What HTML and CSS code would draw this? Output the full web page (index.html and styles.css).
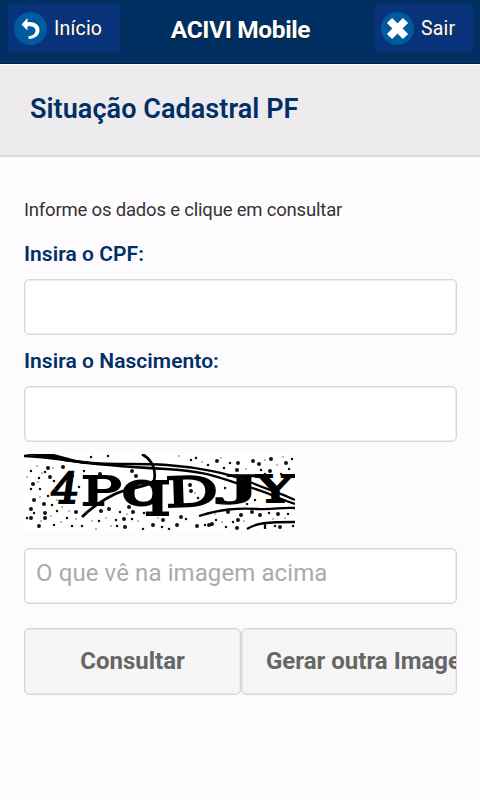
FILE: index.html
```html
<!DOCTYPE html>
<html lang="pt-BR">
<head>
<meta charset="utf-8">
<title>ACIVI Mobile</title>
<link rel="stylesheet" href="styles.css">
</head>
<body>
<header class="topbar">
  <a class="nav nav-home"><svg class="icon" viewBox="0 0 33 33"><circle cx="16.500" cy="16.500" r="16.500" fill="#005aa0"/><path d="M7.500 12.500L13.500 6V10C21 9.500 25.500 13 25.500 18C25.500 23.500 21 27 14.500 27V24.200C18.500 24 21.500 22 21.500 18.500C21.500 15.500 18.500 14 13.500 14.300V18.500Z" fill="#fff"/></svg><span>Início</span></a>
  <h1>ACIVI Mobile</h1>
  <a class="nav nav-exit"><svg class="icon" viewBox="0 0 33 33"><circle cx="16.500" cy="16.500" r="16.500" fill="#005aa0"/><path d="M8.500 8.500L24.500 24.500M24.500 8.500L8.500 24.500" stroke="#fff" stroke-width="7.400" fill="none"/></svg><span>Sair</span></a>
</header>
<div class="heading"><h2>Situação Cadastral PF</h2></div>
<main>
  <p class="intro">Informe os dados e clique em consultar</p>
  <label for="cpf">Insira o CPF:</label>
  <input id="cpf" type="text">
  <label class="birth-label" for="birth">Insira o Nascimento:</label>
  <input id="birth" type="text">
  <svg class="captcha" viewBox="0 0 271 76">
    <rect width="271" height="76" fill="#fff"/>
    <g class="letters">
      <text transform="translate(25 49) skewX(-8) scale(1.050 1)" font-size="42">4</text>
      <text transform="translate(57 51) scale(1.550 1)" font-size="39">P</text>
      <text transform="translate(97 51) scale(1.650 1)" font-size="46">q</text>
      <text transform="translate(142 53) rotate(-2) scale(1.600 1)" font-size="41">D</text>
      <text class="hooked" transform="translate(191 50) scale(2.600 1)" font-size="45">J</text>
      <text transform="translate(233 48) scale(1.500 1)" font-size="37">Y</text>
    </g>
    <g class="strokes">
      <path d="M0 2C25 3 45 7 68 9S115 9 143 11S205 19 226 28S252 37 271 46"/>
      <path d="M0 0H30L56 7L78 9L60 10Z" fill="#000" stroke="none"/>
      <path d="M40 6C75 11 105 13 142 15S190 22 222 32S250 43 271 50"/>
      <path d="M118 0C130 7 132 18 130 27C120 34 103 34 91 40S66 55 58 63" stroke-width="2.800"/>
      <path d="M175 62C197 55 213 54 233 55S255 53 271 54"/>
      <path d="M223 75C232 69 242 68 271 68M241 69V75"/>
    </g>
    <path class="dots large" d="M24 14h0M39 13h0M26 23h0M9 30h0M10 46h0M7 55h0M7 64h0M20 50h0M21 59h0M21 64h0M15 72h0M52 58h0M77 57h0M76 20h0M108 17h0M112 22h0M105 53h0M109 58h0M100 65h0M101 73h0M129 71h0M139 66h0M157 63h0M173 72h0M188 70h0M193 7h0M214 9h0M213 16h0M213 22h0M229 7h0M235 10h0M247 5h0M262 9h0M246 17h0M228 58h0M236 61h0M254 60h0M217 61h0M204 58h0M214 66h0M256 73h0M213 74h0M185 71h0M166 31h0M167 37h0M153 71h0M85 55h0"/>
    <path class="dots medium" d="M7 17h0M21 18h0M15 24h0M30 27h0M7 35h0M24 42h0M28 51h0M33 57h0M16 35h0M10 59h0M3 64h0M30 71h0M48 72h0M58 72h0M67 3h0M84 2h0M75 67h0M92 66h0M93 72h0M108 65h0M119 75h0M145 75h0M55 33h0M49 22h0M60 17h0M43 64h0M96 58h0M120 59h0M138 73h0M167 6h0M172 4h0M200 14h0M206 9h0M218 25h0M237 16h0M241 20h0M257 20h0M265 15h0M268 5h0M192 66h0M202 73h0M209 68h0M181 71h0M162 65h0M174 44h0M223 50h0M231 46h0M245 59h0M264 60h0M251 72h0M269 72h0M201 34h0M184 11h0"/>
    <path class="dots small" d="M13 12h0M18 19h0M29 14h0M3 23h0M14 28h0M31 35h0M16 43h0M33 46h0M27 62h0M38 53h0M45 57h0M52 65h0M62 58h0M68 67h0M82 64h0M87 72h0M103 60h0M114 67h0M126 60h0M134 64h0M155 2h0M178 8h0M197 4h0M222 15h0M241 6h0M253 11h0M259 3h0M180 60h0M191 60h0M198 68h0M220 67h0M261 64h0M249 65h0M17 67h0M37 68h0M72 75h0M171 39h0M191 34h0"/>
  </svg>
  <input id="code" type="text" placeholder="O que vê na imagem acima">
  <div class="actions">
    <button>Consultar</button>
    <button class="refresh">Gerar outra Imagem</button>
  </div>
</main>
</body>
</html>
```
FILE: styles.css
```css
* { box-sizing: border-box; }
body { margin: 0; height: 800px; overflow: hidden; background: #fefbff; color: #333; font-family: Roboto, sans-serif; }
h1, h2, p { margin: 0; }
.topbar { height: 64px; background: #003062; border-bottom: 1px solid #001b4c; display: grid; grid-template-columns: 112px 1fr 98px; padding: 4px 7px 0 8px; align-items: start; color: #fff; }
.nav { height: 48px; background: #08327a; border-radius: 2px; display: flex; align-items: center; padding-left: 6px; gap: 7px; font-size: 19.500px; letter-spacing: .2px; text-shadow: 1px 1px 1px #333; }
.icon { width: 33px; height: 33px; }
h1 { font-size: 24.500px; letter-spacing: -.38px; line-height: 52px; font-weight: 700; text-align: center; text-shadow: 0 1px 1px #111; padding-right: 14px; }
.heading { height: 93px; background: #eeebee; border-top: 1px solid #fff; border-bottom: 2px solid #ddd9dd; padding: 28px 30px; }
h2 { font-size: 27px; letter-spacing: .06px; line-height: 32px; font-weight: 600; color: #003064; }
main { padding: 41px 23px 0 24px; }
.intro { font-size: 18.500px; letter-spacing: -.19px; line-height: 24px; }
label { display: block; font-size: 21px; letter-spacing: .05px; line-height: 26px; font-weight: 600; color: #003064; margin-top: 19px; }
label.birth-label { margin-top: 13px; }
input { display: block; width: 100%; height: 56px; border: 1px solid #d7d6d8; box-shadow: inset 0 0 0 1px #eeedef; border-radius: 5px; background: #fff; margin: 12px 0 0; padding: 0 11px 7px; font: 24px Roboto, sans-serif; letter-spacing: .1px; color: #333; outline: 0; }
input::placeholder { color: #aaa; opacity: 1; }
.captcha { display: block; width: 271px; height: 76px; margin: 12px 0 18px; }
.letters { font-family: "DejaVu Serif", serif; font-weight: 400; stroke: #000; stroke-width: 2px; }
.hooked { font-family: "Liberation Serif", serif; stroke-width: 1.500px; }
.strokes { fill: none; stroke: #000; stroke-width: 2.300px; }
.dots { fill: none; stroke: #111; stroke-linecap: round; }
.large { stroke-width: 4px; }
.medium { stroke-width: 2.500px; }
.small { stroke-width: 1.500px; stroke: #555; }
#code { margin: 0; }
.actions { display: grid; grid-template-columns: 217px 216px; margin-top: 24px; }
button { height: 67px; border: 1px solid #d7d6d8; box-shadow: inset 0 0 0 1px #e8e7e9; border-radius: 5px; background: #f6f6f6; padding: 0 0 2px; overflow: hidden; font: 700 24px Roboto, sans-serif; color: #666; white-space: nowrap; }
.refresh { text-align: left; padding-left: 24px; }
```
